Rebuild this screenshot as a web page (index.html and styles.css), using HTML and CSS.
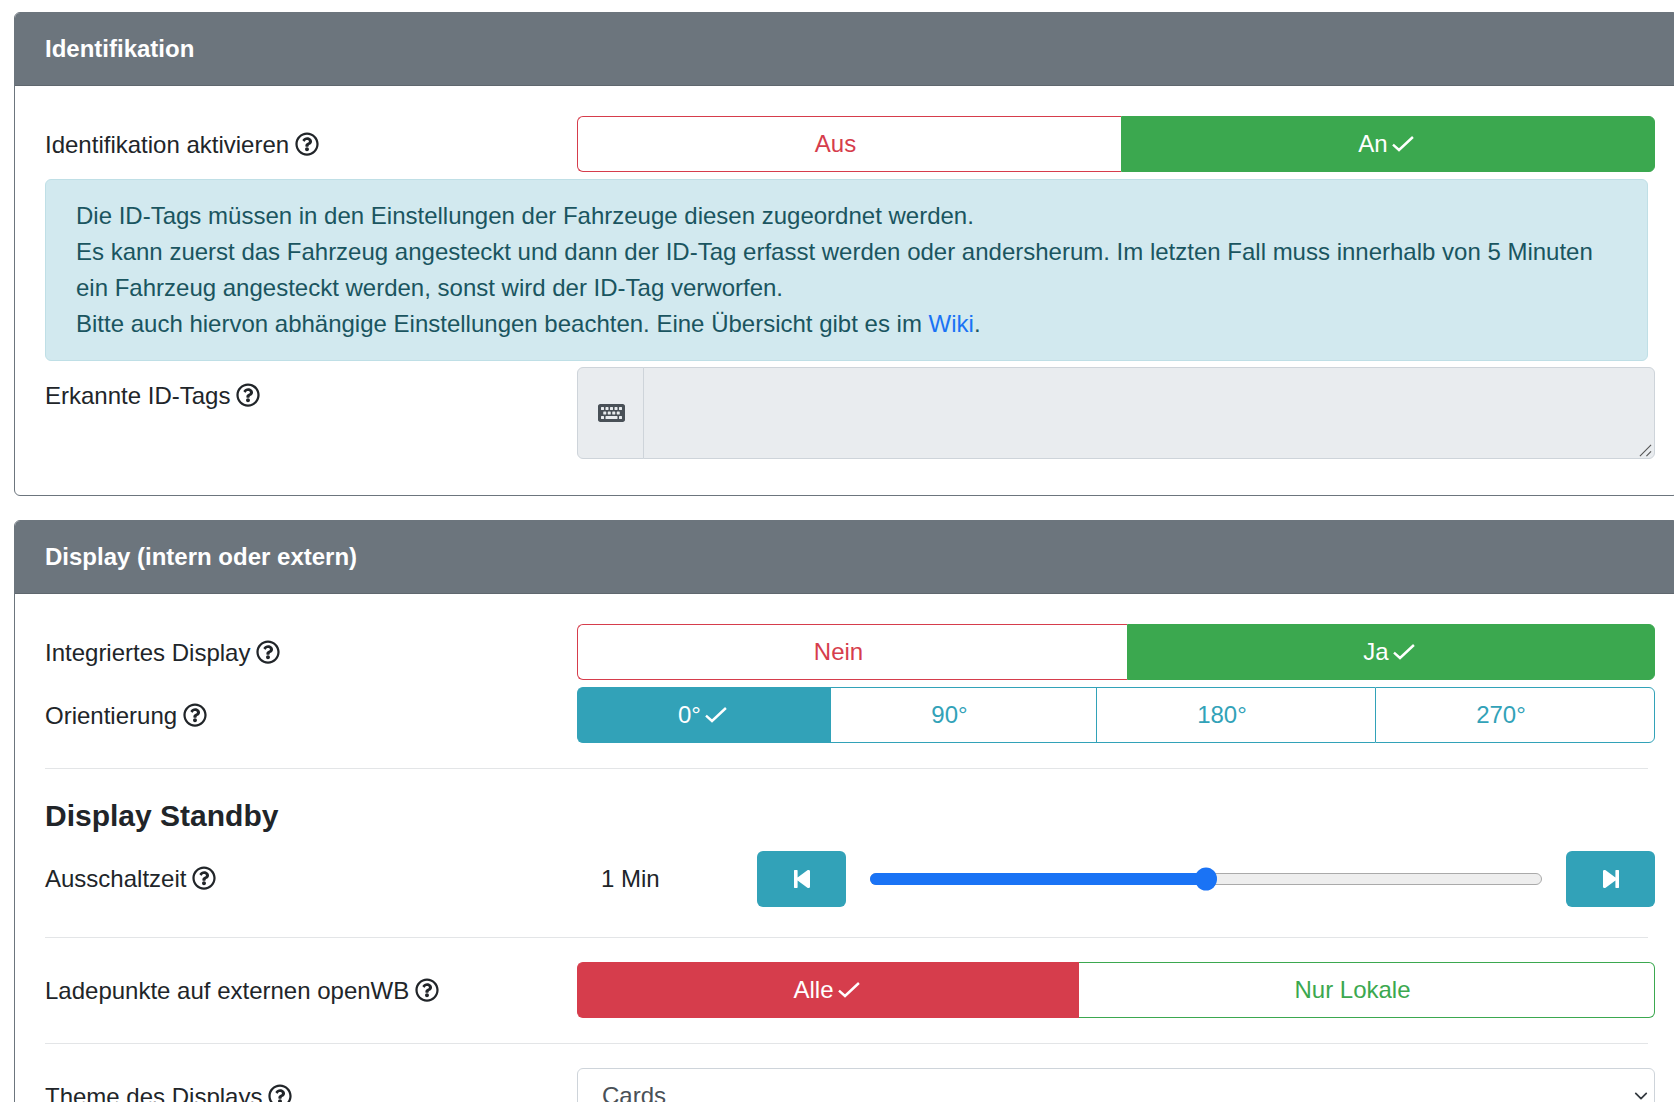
FILE: index.html
```html
<!DOCTYPE html>
<html lang="de">
<head>
<meta charset="utf-8">
<title>Einstellungen</title>
<link rel="stylesheet" href="styles.css">
</head>
<body>
<svg class="sprite" xmlns="http://www.w3.org/2000/svg" aria-hidden="true">
  <symbol id="q" viewBox="0 0 512 512"><path d="M256 8C119.043 8 8 119.083 8 256c0 136.997 111.043 248 248 248s248-111.003 248-248C504 119.083 392.957 8 256 8zm0 448c-110.532 0-200-89.431-200-200 0-110.495 89.472-200 200-200 110.491 0 200 89.471 200 200 0 110.53-89.431 200-200 200zm107.244-255.2c0 67.052-72.421 68.084-72.421 92.863V300c0 6.627-5.373 12-12 12h-45.647c-6.627 0-12-5.373-12-12v-8.659c0-35.745 27.1-50.034 47.579-61.516 17.561-9.845 28.324-16.541 28.324-29.579 0-17.246-21.999-28.693-39.784-28.693-23.189 0-33.894 10.977-48.942 29.969-4.057 5.12-11.46 6.071-16.666 2.124l-27.824-21.098c-5.107-3.872-6.251-11.066-2.644-16.363C184.846 131.491 214.94 112 261.794 112c49.071 0 101.45 38.304 101.45 88.8zM298 368c0 23.159-18.841 42-42 42s-42-18.841-42-42 18.841-42 42-42 42 18.841 42 42z"/></symbol>
  <symbol id="check" viewBox="0 0 22 16"><polyline points="1,8.6 7,14 20.9,1" fill="none" stroke="currentColor" stroke-width="2.4"/></symbol>
  <symbol id="back" viewBox="64 32 320 448" preserveAspectRatio="none"><path d="M64 468V44c0-6.6 5.4-12 12-12h48c6.6 0 12 5.4 12 12v176.4l195.5-181C352.1 22.3 384 36.6 384 64v384c0 27.4-31.9 41.7-52.5 24.6L136 292.7V468c0 6.6-5.4 12-12 12H76c-6.6 0-12-5.4-12-12z"/></symbol>
  <symbol id="forward" viewBox="64 32 320 448" preserveAspectRatio="none"><path d="M384 44v424c0 6.6-5.4 12-12 12h-48c-6.6 0-12-5.4-12-12V291.6l-195.5 181C95.9 489.7 64 475.4 64 448V64c0-27.4 31.9-41.7 52.5-24.6L312 219.3V44c0-6.6 5.4-12 12-12h48c6.6 0 12 5.4 12 12z"/></symbol>
  <symbol id="keyboard" viewBox="0 0 576 512"><path d="M528 448H48c-26.51 0-48-21.49-48-48V112c0-26.51 21.49-48 48-48h480c26.51 0 48 21.49 48 48v288c0 26.51-21.49 48-48 48zM128 180v-40c0-6.627-5.373-12-12-12H76c-6.627 0-12 5.373-12 12v40c0 6.627 5.373 12 12 12h40c6.627 0 12-5.373 12-12zm96 0v-40c0-6.627-5.373-12-12-12h-40c-6.627 0-12 5.373-12 12v40c0 6.627 5.373 12 12 12h40c6.627 0 12-5.373 12-12zm96 0v-40c0-6.627-5.373-12-12-12h-40c-6.627 0-12 5.373-12 12v40c0 6.627 5.373 12 12 12h40c6.627 0 12-5.373 12-12zm96 0v-40c0-6.627-5.373-12-12-12h-40c-6.627 0-12 5.373-12 12v40c0 6.627 5.373 12 12 12h40c6.627 0 12-5.373 12-12zm96 0v-40c0-6.627-5.373-12-12-12h-40c-6.627 0-12 5.373-12 12v40c0 6.627 5.373 12 12 12h40c6.627 0 12-5.373 12-12zm-336 96v-40c0-6.627-5.373-12-12-12h-40c-6.627 0-12 5.373-12 12v40c0 6.627 5.373 12 12 12h40c6.627 0 12-5.373 12-12zm96 0v-40c0-6.627-5.373-12-12-12h-40c-6.627 0-12 5.373-12 12v40c0 6.627 5.373 12 12 12h40c6.627 0 12-5.373 12-12zm96 0v-40c0-6.627-5.373-12-12-12h-40c-6.627 0-12 5.373-12 12v40c0 6.627 5.373 12 12 12h40c6.627 0 12-5.373 12-12zm96 0v-40c0-6.627-5.373-12-12-12h-40c-6.627 0-12 5.373-12 12v40c0 6.627 5.373 12 12 12h40c6.627 0 12-5.373 12-12zM128 372v-40c0-6.627-5.373-12-12-12H76c-6.627 0-12 5.373-12 12v40c0 6.627 5.373 12 12 12h40c6.627 0 12-5.373 12-12zm288 0v-40c0-6.627-5.373-12-12-12H172c-6.627 0-12 5.373-12 12v40c0 6.627 5.373 12 12 12h232c6.627 0 12-5.373 12-12zm96 0v-40c0-6.627-5.373-12-12-12h-40c-6.627 0-12 5.373-12 12v40c0 6.627 5.373 12 12 12h40c6.627 0 12-5.373 12-12z"/></symbol>
</svg>

<main class="page">
  <section class="card">
    <header class="card-header">Identifikation</header>
    <div class="card-body">
      <div class="row">
        <label class="row-label">Identifikation aktivieren <svg class="help"><use href="#q"/></svg></label>
        <div class="toggle t-onoff">
          <button class="tbtn out-red">Aus<svg class="tick tick-off"><use href="#check"/></svg></button>
          <button class="tbtn fill-green">An<svg class="tick"><use href="#check"/></svg></button>
        </div>
      </div>
      <div class="alert">
        Die ID-Tags müssen in den Einstellungen der Fahrzeuge diesen zugeordnet werden.<br>
        Es kann zuerst das Fahrzeug angesteckt und dann der ID-Tag erfasst werden oder andersherum. Im letzten Fall muss innerhalb von 5 Minuten ein Fahrzeug angesteckt werden, sonst wird der ID-Tag verworfen.<br>
        Bitte auch hiervon abhängige Einstellungen beachten. Eine Übersicht gibt es im <a href="#">Wiki</a>.
      </div>
      <div class="row row-tight">
        <label class="row-label label-top">Erkannte ID-Tags <svg class="help"><use href="#q"/></svg></label>
        <div class="input-group">
          <span class="addon"><svg class="kbd"><use href="#keyboard"/></svg></span>
          <textarea class="area" rows="2" disabled></textarea>
          <svg class="grip" viewBox="0 0 14 14"><path d="M1 13L13 1M8 13l5-5" fill="none" stroke="#555" stroke-width="1.2"/></svg>
        </div>
      </div>
    </div>
  </section>

  <section class="card">
    <header class="card-header">Display (intern oder extern)</header>
    <div class="card-body">
      <div class="row">
        <label class="row-label">Integriertes Display <svg class="help"><use href="#q"/></svg></label>
        <div class="toggle t-display">
          <button class="tbtn out-red">Nein<svg class="tick tick-off"><use href="#check"/></svg></button>
          <button class="tbtn fill-green">Ja<svg class="tick"><use href="#check"/></svg></button>
        </div>
      </div>
      <div class="row">
        <label class="row-label">Orientierung <svg class="help"><use href="#q"/></svg></label>
        <div class="toggle t-orient">
          <button class="tbtn fill-teal">0°<svg class="tick"><use href="#check"/></svg></button>
          <button class="tbtn out-teal">90°<svg class="tick tick-off"><use href="#check"/></svg></button>
          <button class="tbtn out-teal">180°<svg class="tick tick-off"><use href="#check"/></svg></button>
          <button class="tbtn out-teal">270°<svg class="tick tick-off"><use href="#check"/></svg></button>
        </div>
      </div>
      <hr class="divider">
      <h3 class="subhead">Display Standby</h3>
      <div class="row row-range">
        <label class="row-label label-range">Ausschaltzeit <svg class="help"><use href="#q"/></svg></label>
        <div class="range-ctl">
          <span class="range-value">1 Min</span>
          <button class="step"><svg class="step-icon"><use href="#back"/></svg></button>
          <div class="track">
            <div class="track-fill" style="width:50%"></div>
            <div class="thumb" style="left:50%"></div>
          </div>
          <button class="step"><svg class="step-icon"><use href="#forward"/></svg></button>
        </div>
      </div>
      <hr class="divider">
      <div class="row">
        <label class="row-label">Ladepunkte auf externen openWB <svg class="help"><use href="#q"/></svg></label>
        <div class="toggle t-scope">
          <button class="tbtn fill-red">Alle<svg class="tick"><use href="#check"/></svg></button>
          <button class="tbtn out-green">Nur Lokale<svg class="tick tick-off"><use href="#check"/></svg></button>
        </div>
      </div>
      <hr class="divider">
      <div class="row">
        <label class="row-label">Theme des Displays <svg class="help"><use href="#q"/></svg></label>
        <select class="select"><option>Cards</option></select>
      </div>
    </div>
  </section>
</main>
</body>
</html>
```

FILE: styles.css
```css
html, body {
  margin: 0;
  height: 1102px;
  overflow: hidden;
  background: #fff;
}
body {
  font-family: "Liberation Sans", Arial, sans-serif;
  font-size: 24px;
  line-height: 36px;
  color: #212529;
}
.sprite { display: none; }
.page {
  padding: 12px 0 0 14px;
  width: 1665px;
}
.card {
  border: 1px solid #6c757d;
  border-radius: 6px;
  margin-bottom: 24px;
  background: #fff;
}
.card-header {
  background: #6c757d;
  color: #fff;
  font-weight: 700;
  padding: 18px 30px;
  border-bottom: 1px solid #5f676e;
  border-radius: 5px 5px 0 0;
}
.card-body { padding: 30px; }

.row {
  display: grid;
  grid-template-columns: 532px 1078px;
  width: 1610px;
  margin-bottom: 7px;
}
.row-tight { margin-bottom: 6px; }
.row-range { margin-bottom: 30px; }
.row-label { align-self: center; padding-top: 2px; }
.label-top { align-self: start; padding-top: 11px; }
.label-range { padding-top: 0; }
.help {
  width: 24px;
  height: 24px;
  margin-left: -1px;
  fill: #212529;
  vertical-align: -3px;
}

.toggle { display: grid; }
.t-onoff { grid-template-columns: 544fr 534fr; }
.t-display { grid-template-columns: 550fr 528fr; }
.t-orient { grid-template-columns: 254fr 265fr 279fr 280fr; }
.t-scope { grid-template-columns: 502fr 576fr; }

.tbtn {
  font: inherit;
  height: 56px;
  padding: 0;
  background: #fff;
  border: 1px solid transparent;
  border-right-width: 0;
  cursor: pointer;
}
.tbtn:first-child { border-radius: 6px 0 0 6px; }
.tbtn:last-child { border-radius: 0 6px 6px 0; border-right-width: 1px; }
.out-red { color: #d63d4c; border-color: #d63d4c; }
.out-teal { color: #32a2b8; border-color: #32a2b8; }
.out-green { color: #3ba84f; border-color: #3ba84f; }
.fill-green { color: #fff; background: #3ba84f; border-color: #3ba84f; padding-right: 4px; }
.fill-teal { color: #fff; background: #32a2b8; border-color: #32a2b8; padding-right: 4px; }
.fill-red { color: #fff; background: #d63d4c; border-color: #d63d4c; padding-right: 4px; }
.fill-teal + .tbtn, .fill-red + .tbtn { border-left-width: 0; }
.tick {
  width: 22px;
  height: 16px;
  margin-left: 4px;
  vertical-align: 0;
}
.tick-off { visibility: hidden; margin-left: 6px; }

.alert {
  background: #d2e9ef;
  border: 1px solid #bfdfe6;
  border-radius: 6px;
  color: #1a5560;
  padding: 18px 30px;
  margin-bottom: 6px;
}
.alert a { color: #1a73f5; text-decoration: none; }

.input-group { position: relative; display: flex; height: 92px; }
.addon {
  flex: 0 0 67px;
  box-sizing: border-box;
  display: flex;
  align-items: center;
  justify-content: center;
  padding-left: 1px;
  background: #e9ecef;
  border: 1px solid #ced4da;
  border-radius: 6px 0 0 6px;
}
.kbd { width: 27px; height: 24px; fill: #495057; }
.area {
  flex: 1;
  box-sizing: border-box;
  height: 92px;
  min-width: 0;
  margin: 0 0 0 -1px;
  padding: 9px 18px;
  font: inherit;
  background: #e9ecef;
  border: 1px solid #ced4da;
  border-radius: 0 6px 6px 0;
  resize: none;
}
.grip {
  position: absolute;
  right: 3px;
  bottom: 2px;
  width: 13px;
  height: 13px;
}

.divider {
  border: 0;
  border-top: 1px solid #e3e5e7;
  margin: 25px 0 24px;
}
.subhead {
  font-size: 30px;
  line-height: 36px;
  font-weight: 700;
  margin: 29px 0 17px;
}

.range-ctl {
  display: flex;
  align-items: center;
  height: 56px;
}
.range-value {
  flex: 0 0 180px;
  box-sizing: border-box;
  padding-left: 24px;
}
.step {
  flex: 0 0 89px;
  height: 56px;
  padding: 0;
  border: 0;
  border-radius: 6px;
  background: #32a2b8;
  display: flex;
  align-items: center;
  justify-content: center;
}
.step-icon { width: 16px; height: 18px; fill: #fff; }
.track {
  position: relative;
  flex: 1;
  height: 12px;
  margin: 0 24px;
  box-sizing: border-box;
  background: #eee;
  border: 1px solid #aaa;
  border-radius: 6px;
}
.track-fill {
  height: 12px;
  margin: -1px 0 0 -1px;
  background: #1a73f5;
  border-radius: 6px 0 0 6px;
}
.thumb {
  position: absolute;
  top: 50%;
  width: 22px;
  height: 23px;
  transform: translate(-50%, -50%);
  border-radius: 50%;
  background: #1a73f5;
}

.select {
  appearance: none;
  height: 56px;
  box-sizing: border-box;
  width: 100%;
  padding: 9px 54px 9px 24px;
  font: inherit;
  color: #495057;
  background: #fff url("data:image/svg+xml,%3csvg xmlns='http://www.w3.org/2000/svg' viewBox='0 0 16 16'%3e%3cpath fill='none' stroke='%23343a40' stroke-linecap='round' stroke-linejoin='round' stroke-width='2' d='M2 5l6 6 6-6'/%3e%3c/svg%3e") no-repeat right 4px center / 18px 14px;
  border: 1px solid #ced4da;
  border-radius: 6px;
}
```
